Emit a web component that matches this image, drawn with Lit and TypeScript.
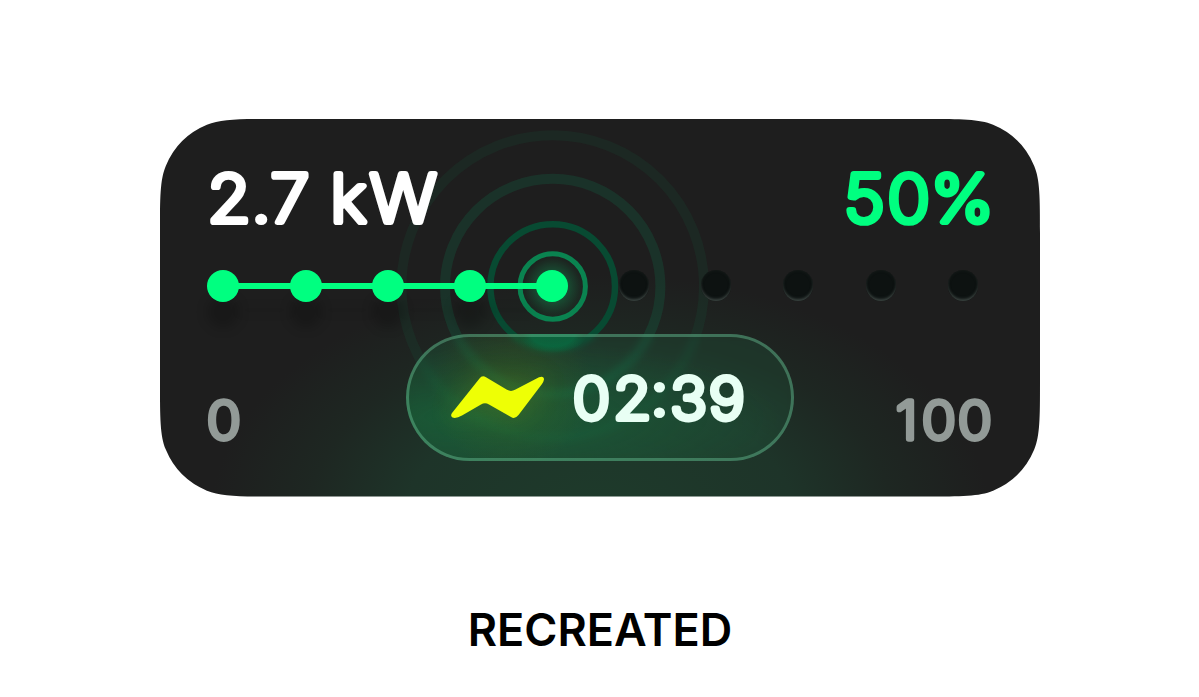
import { LitElement, html, svg, css } from 'lit';
import { customElement, property } from 'lit/decorators.js';

/* Path of a box whose corners ease into the straight sides */
function smoothBox(w: number, h: number, r: number, smoothing: number) {
  const rad = Math.PI / 180;
  const p = (1 + smoothing) * r;
  const arc = Math.sin(45 * (1 - smoothing) * rad) * r * Math.SQRT2;
  const len = r * Math.tan(22.5 * smoothing * rad);
  const c = len * Math.cos(45 * smoothing * rad);
  const d = len * Math.sin(45 * smoothing * rad);
  const b = (p - arc - c - d) / 3;
  const a = 2 * b;
  return `M${w - p} 0
    c${a} 0 ${a + b} 0 ${a + b + c} ${d}
    a${r} ${r} 0 0 1 ${arc} ${arc}
    c${d} ${c} ${d} ${b + c} ${d} ${a + b + c}
    V${h - p}
    c0 ${a} 0 ${a + b} ${-d} ${a + b + c}
    a${r} ${r} 0 0 1 ${-arc} ${arc}
    c${-c} ${d} ${-(b + c)} ${d} ${-(a + b + c)} ${d}
    H${p}
    c${-a} 0 ${-(a + b)} 0 ${-(a + b + c)} ${-d}
    a${r} ${r} 0 0 1 ${-arc} ${-arc}
    c${-d} ${-c} ${-d} ${-(b + c)} ${-d} ${-(a + b + c)}
    V${p}
    c0 ${-a} 0 ${-(a + b)} ${d} ${-(a + b + c)}
    a${r} ${r} 0 0 1 ${arc} ${-arc}
    c${c} ${-d} ${b + c} ${-d} ${a + b + c} ${-d}
    Z`;
}

/* Text with rounded stroke ends, the glyphs are placed one by one */
@customElement('round-text')
class RoundText extends LitElement {
  @property() text = '';
  @property() stops = '0';
  @property() shifts = '0';
  @property({ type: Number }) width = 0;
  @property({ type: Number }) height = 0;
  @property({ type: Number }) size = 40;
  @property({ type: Number }) stroke = 4;

  static styles = css`
    :host {
      display: block;
    }

    svg {
      display: block;
      overflow: visible;
    }

    text {
      font-family: Inter, 'Liberation Sans', sans-serif;
      font-weight: 230;
      font-variation-settings: 'opsz' 14;
      fill: currentColor;
      stroke: currentColor;
      stroke-linejoin: round;
      stroke-linecap: round;
    }
  `;

  render() {
    const stretch = 1.07;
    const x = this.stops.split(' ').map((stop) => Number(stop) / stretch);
    return html`
      <svg width=${this.width} height=${this.height}>
        <text
          transform="scale(${stretch} 1)"
          x=${x.join(' ')}
          y=${this.height - this.stroke / 2 + 0.6}
          dy=${this.shifts}
          font-size=${this.size}
          stroke-width=${this.stroke}
        >${this.text}</text>
      </svg>
    `;
  }
}

@customElement('charge-track')
class ChargeTrack extends LitElement {
  @property({ type: Number }) level = 5;
  @property({ type: Number }) total = 10;

  static styles = css`
    :host {
      display: flex;
      align-items: center;
    }

    .dot {
      flex: none;
      width: 32px;
      height: 32px;
      border-radius: 50%;
      background: #00ff80;
      box-shadow: 0 26px 12px rgba(0, 0, 0, 0.2);
    }

    .dot.current {
      box-shadow: 0 0 16px rgba(0, 255, 128, 0.12);
    }

    .dot.empty {
      background: #0d1211;
      width: 30px;
      height: 31px;
      margin: 0 1px;
      box-shadow:
        inset 0 -3px 3px -1px #3a4340,
        inset 0 0 3px #1a1f1d;
    }

    .line {
      flex: 1;
      height: 6px;
      margin: 0 -1px;
      background: #00ff80;
      box-shadow: 0 24px 10px rgba(0, 0, 0, 0.08);
    }

    .line.empty {
      visibility: hidden;
    }
  `;

  render() {
    const steps = Array.from({ length: this.total }, (_, i) => i + 1);
    return steps.map((step) => {
      const empty = step > this.level ? 'empty' : '';
      const current = step === this.level ? 'current' : '';
      return html`
        ${step > 1 ? html`<div class="line ${empty}"></div>` : ''}
        <div class="dot ${empty} ${current}"></div>
      `;
    });
  }
}

@customElement('app-root')
class AppRoot extends LitElement {
  static styles = css`
    :host {
      display: flex;
      flex-direction: column;
      align-items: center;
      box-sizing: border-box;
      width: 1199px;
      height: 697px;
      padding-top: 119px;
      padding-left: 1px;
      overflow: hidden;
      background: white;
      font-family: Inter, 'Liberation Sans', sans-serif;
    }

    .card {
      display: grid;
      width: 880px;
      height: 378px;
    }

    /* The backdrop and the content share one cell */
    .card > * {
      grid-area: 1 / 1;
    }

    .content {
      display: flex;
      flex-direction: column;
      padding: 52px 48px 0;
    }

    .header,
    .footer {
      display: flex;
      justify-content: space-between;
    }

    .power {
      color: white;
    }

    .percent {
      color: #00ff80;
    }

    charge-track {
      margin: 45px 13.4px 0 -0.6px;
    }

    .footer {
      align-items: flex-end;
      margin-top: 32px;
    }

    .limit {
      flex: 1;
      display: flex;
      margin-bottom: 19px;
      color: #929a97;
    }

    .limit.end {
      justify-content: flex-end;
    }

    /* The glass pill with the remaining time */
    .pill {
      display: flex;
      align-items: center;
      gap: 29px;
      box-sizing: border-box;
      width: 388px;
      height: 127px;
      padding-left: 42px;
      border: 3px solid rgba(110, 200, 155, 0.42);
      border-radius: 64px;
      background:
        radial-gradient(ellipse 34px 19px at 147px 0, rgba(8, 108, 66, 0.8) 65%, transparent),
        radial-gradient(circle at 27% 42%, rgba(110, 120, 0, 0.2), transparent 28%),
        radial-gradient(ellipse at 16% 65%, rgba(20, 125, 65, 0.46), transparent 68%),
        rgba(35, 120, 78, 0.18);
      background-origin: border-box;
      backdrop-filter: blur(3px);
      color: #e8fff4;
    }

    .bolt {
      display: block;
      overflow: visible;
      filter: drop-shadow(0 0 14px rgba(200, 240, 0, 0.12));
    }

    .caption {
      margin: 106px 0 0;
      font-size: 45px;
      line-height: 54px;
      font-weight: 600;
      color: black;
    }
  `;

  renderBackdrop() {
    const rings = [
      { r: 32.7, width: 5, color: '#0a8350' },
      { r: 62.3, width: 6.5, color: '#084a32' },
      { r: 107.7, width: 10, color: 'rgba(0, 200, 120, 0.12)' },
      { r: 151.3, width: 10, color: 'rgba(0, 200, 120, 0.06)' },
    ];
    return html`
      <svg width="880" height="378">
        <defs>
          <radialGradient
            id="glow"
            gradientUnits="userSpaceOnUse"
            cx="0"
            cy="0"
            r="1"
            gradientTransform="translate(440 400) scale(390 245)"
          >
            <stop offset="0" stop-color="#1e3b2b" />
            <stop offset="0.5" stop-color="#1e3429" />
            <stop offset="0.75" stop-color="#1e2722" />
            <stop offset="1" stop-color="#1e1e1e" />
          </radialGradient>
          <radialGradient id="halo">
            <stop offset="0.4" stop-color="#00ff80" stop-opacity="0.18" />
            <stop offset="1" stop-color="#00ff80" stop-opacity="0" />
          </radialGradient>
        </defs>
        <path d=${smoothBox(880, 377.5, 76, 0.5)} fill="url(#glow)" />
        ${rings.map(
          (ring) => svg`
            <circle cx="392.7" cy="167.5" r=${ring.r} fill="none"
              stroke=${ring.color} stroke-width=${ring.width} />
          `
        )}
        <circle cx="392.7" cy="167.5" r="32" fill="url(#halo)" />
      </svg>
    `;
  }

  render() {
    return html`
      <div class="card">
        ${this.renderBackdrop()}
        <div class="content">
          <div class="header">
            <round-text
              class="power"
              text="2.7 kW"
              stops="-0.5 43.5 62.5 103 122.5 162"
              width="229"
              height="53.5"
              size="65.5"
              stroke="6.2"
            ></round-text>
            <round-text
              class="percent"
              text="50%"
              stops="-1 42.5 86"
              width="147"
              height="53.5"
              size="65.5"
              stroke="6.2"
            ></round-text>
          </div>
          <charge-track level="5" total="10"></charge-track>
          <div class="footer">
            <div class="limit">
              <round-text
                text="0"
                stops="-1"
                width="33"
                height="43.5"
                size="52"
                stroke="5.4"
              ></round-text>
            </div>
            <div class="pill">
              <svg class="bolt" width="93" height="43" viewBox="0 0 93 43">
                <path
                  d="M1 37 L28.5 2.5 Q31 -1 35 1.2 L56 13.8 Q60 16 64 13.8 L88 1.2 Q93 -.5 93 3.5 Q92.500 6 91 8 L67.500 39 Q64 43.500 60 41 L38 28.500 Q34 26 30 28.500 L11 39.500 Q5 43 1.500 41.500 Q-1 40 1 37 Z"
                  fill="#eeff05"
                />
              </svg>
              <round-text
                text="02:39"
                stops="0 40.5 78 97.5 136"
                shifts="0 0 -4 4 0"
                width="172"
                height="48.5"
                size="57"
                stroke="6"
              ></round-text>
            </div>
            <div class="limit end">
              <round-text
                text="100"
                stops="-1 25 61"
                width="95"
                height="43.5"
                size="52"
                stroke="5.4"
              ></round-text>
            </div>
          </div>
        </div>
      </div>
      <p class="caption">RECREATED</p>
    `;
  }
}
